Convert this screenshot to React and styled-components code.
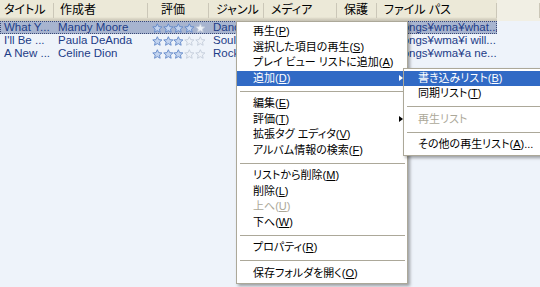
import React from 'react';
import styled, { createGlobalStyle } from 'styled-components';

const GlobalStyle = createGlobalStyle`
  html, body { margin: 0; padding: 0; }
  body {
    width: 540px;
    height: 287px;
    overflow: hidden;
    background: #eef3fa;
  }
`;

const columns = [
  { label: 'タイトル', width: 54, pad: 4 },
  { label: '作成者', width: 94, pad: 6 },
  { label: '評価', width: 61, pad: 13 },
  { label: 'ジャンル', width: 55, pad: 7 },
  { label: 'メディア', width: 73, pad: 7 },
  { label: '保護', width: 40, pad: 7 },
  { label: 'ファイル パス', width: 120, pad: 7 },
];

const gridCols = columns.map((c) => `${c.width}px`).join(' ');

const songs = [
  { title: 'What Y...', artist: 'Mandy Moore', rating: 4, genre: 'Dance', path: 'C:¥songs¥wma¥what...', selected: true },
  { title: "I'll Be ...", artist: 'Paula DeAnda', rating: 3, genre: 'Soul', path: 'C:¥songs¥wma¥i will...' },
  { title: 'A New ...', artist: 'Celine Dion', rating: 3, genre: 'Rock', path: 'C:¥songs¥wma¥a ne...' },
];

const menuItems = [
  { label: '再生', key: 'P' },
  { label: '選択した項目の再生', key: 'S' },
  { label: 'プレイ ビュー リストに追加', key: 'A' },
  { label: '追加', key: 'D', sub: true, active: true },
  { sep: true },
  { label: '編集', key: 'E' },
  { label: '評価', key: 'T', sub: true },
  { label: '拡張タグ エディタ', key: 'V' },
  { label: 'アルバム情報の検索', key: 'F' },
  { sep: true },
  { label: 'リストから削除', key: 'M' },
  { label: '削除', key: 'L' },
  { label: '上へ', key: 'U', disabled: true },
  { label: '下へ', key: 'W' },
  { sep: true },
  { label: 'プロパティ', key: 'R' },
  { sep: true },
  { label: '保存フォルダを開く', key: 'O' },
];

const subItems = [
  { label: '書き込みリスト', key: 'B', active: true },
  { label: '同期リスト', key: 'T' },
  { sep: true },
  { label: '再生リスト', disabled: true },
  { sep: true },
  { label: 'その他の再生リスト', key: 'A', tail: '...' },
];

const Window = styled.div`
  position: relative;
  width: 540px;
  height: 287px;
  background: #eef3fa;
  overflow: hidden;
`;

const Header = styled.div`
  display: grid;
  grid-template-columns: ${gridCols} 1fr;
  height: 21px;
  background: linear-gradient(#ece9d8 0, #ece9d8 17px, #e2decd 18px, #d6d2c2 19px, #cbc7b8 21px);
  font-family: "Liberation Sans", "Noto Sans CJK JP", sans-serif;
  font-feature-settings: "palt";
  font-size: 12px;
  color: #000;
`;

const HeadCell = styled.div`
  position: relative;
  padding-left: ${(p) => p.$pad}px;
  line-height: 21px;
  white-space: nowrap;
  overflow: hidden;
  background: ${(p) => (p.$filler ? '#f1efe4' : 'transparent')};

  &::after {
    content: '';
    position: absolute;
    right: 0;
    top: 3px;
    bottom: 3px;
    width: 1px;
    background: #cbc7b8;
    box-shadow: 1px 0 0 #fff;
  }
`;

const Rows = styled.div`
  display: flex;
  flex-direction: column;
  width: 497px;
`;

const Row = styled.div`
  display: grid;
  grid-template-columns: ${gridCols};
  height: 13px;
  line-height: 13px;
  font-family: "Liberation Sans", "Noto Sans CJK JP", sans-serif;
  font-size: 11.5px;
  color: #1d3c87;
  background: ${(p) => (p.$selected ? '#a7b4cf' : 'transparent')};
  outline: ${(p) => (p.$selected ? '1px dotted #3a4a78' : 'none')};
  outline-offset: -1px;
`;

const Cell = styled.div`
  padding-left: ${(p) => p.$pad ?? 4}px;
  white-space: nowrap;
  overflow: hidden;
`;

const Stars = styled.div`
  display: flex;
  align-items: center;
  height: 13px;
  padding-left: 4px;
`;

const Star = ({ on }) => (
  <svg width="10.7" height="10" viewBox="0 0 11 10">
    <path
      d="M5.5 0.6 L6.9 3.6 L10.2 3.9 L7.7 6.1 L8.4 9.4 L5.5 7.7 L2.6 9.4 L3.3 6.1 L0.8 3.9 L4.1 3.6 Z"
      fill={on ? '#c3d4ef' : '#eef2f8'}
      stroke={on ? '#5f86c8' : '#c2cbd9'}
      strokeWidth="0.9"
      strokeLinejoin="round"
    />
  </svg>
);

const Menu = styled.div`
  position: absolute;
  left: ${(p) => p.$left}px;
  top: ${(p) => p.$top}px;
  width: ${(p) => p.$width}px;
  padding: 2px 0;
  background: #fff;
  border: 1px solid #aca899;
  box-shadow: 2px 2px 3px rgba(0, 0, 0, 0.35);
  font-family: "Liberation Sans", "Noto Sans CJK JP", sans-serif;
  font-feature-settings: "palt";
  font-size: 11px;
  z-index: ${(p) => p.$z};
`;

const Item = styled.div`
  position: relative;
  height: 15.5px;
  line-height: 15.5px;
  margin-right: 2px;
  padding-left: ${(p) => p.$indent}px;
  white-space: nowrap;
  background: ${(p) => (p.$active ? '#316ac5' : 'transparent')};
  color: ${(p) => (p.$active ? '#fff' : p.$disabled ? '#aca899' : '#000')};

  u {
    text-decoration-thickness: 1px;
    text-underline-offset: 1px;
  }
`;

const Arrow = styled.span`
  position: absolute;
  right: 2px;
  top: 4.5px;
  width: 0;
  height: 0;
  border-top: 3.5px solid transparent;
  border-bottom: 3.5px solid transparent;
  border-left: 4px solid ${(p) => (p.$active ? '#fff' : '#000')};
`;

const Separator = styled.div`
  height: 10px;
  margin: 0 2px 0 3px;
  display: flex;
  align-items: center;

  &::before {
    content: '';
    flex: 1;
    height: 1px;
    background: #aca899;
  }
`;

const MenuList = ({ items, indent }) =>
  items.map((it, i) =>
    it.sep ? (
      <Separator key={i} />
    ) : (
      <Item key={i} $indent={indent} $active={it.active} $disabled={it.disabled}>
        {it.label}
        {it.key && (
          <>
            (<u>{it.key}</u>)
          </>
        )}
        {it.tail}
        {it.sub && <Arrow $active={it.active} />}
      </Item>
    )
  );

export default function App() {
  return (
    <>
      <GlobalStyle />
      <Window>
        <Header>
          {columns.map((c) => (
            <HeadCell key={c.label} $pad={c.pad}>
              {c.label}
            </HeadCell>
          ))}
          <HeadCell $pad={0} $filler />
        </Header>
        <Rows>
          {songs.map((s) => (
            <Row key={s.title} $selected={s.selected}>
              <Cell>{s.title}</Cell>
              <Cell>{s.artist}</Cell>
              <Stars>
                {[0, 1, 2, 3, 4].map((n) => (
                  <Star key={n} on={n < s.rating} />
                ))}
              </Stars>
              <Cell>{s.genre}</Cell>
              <Cell />
              <Cell />
              <Cell $pad={2}>{s.path}</Cell>
            </Row>
          ))}
        </Rows>
        <Menu $left={236} $top={21} $width={170} $z={2}>
          <MenuList items={menuItems} indent={16} />
        </Menu>
        <Menu $left={403} $top={67.5} $width={150} $z={3}>
          <MenuList items={subItems} indent={14} />
        </Menu>
      </Window>
    </>
  );
}
